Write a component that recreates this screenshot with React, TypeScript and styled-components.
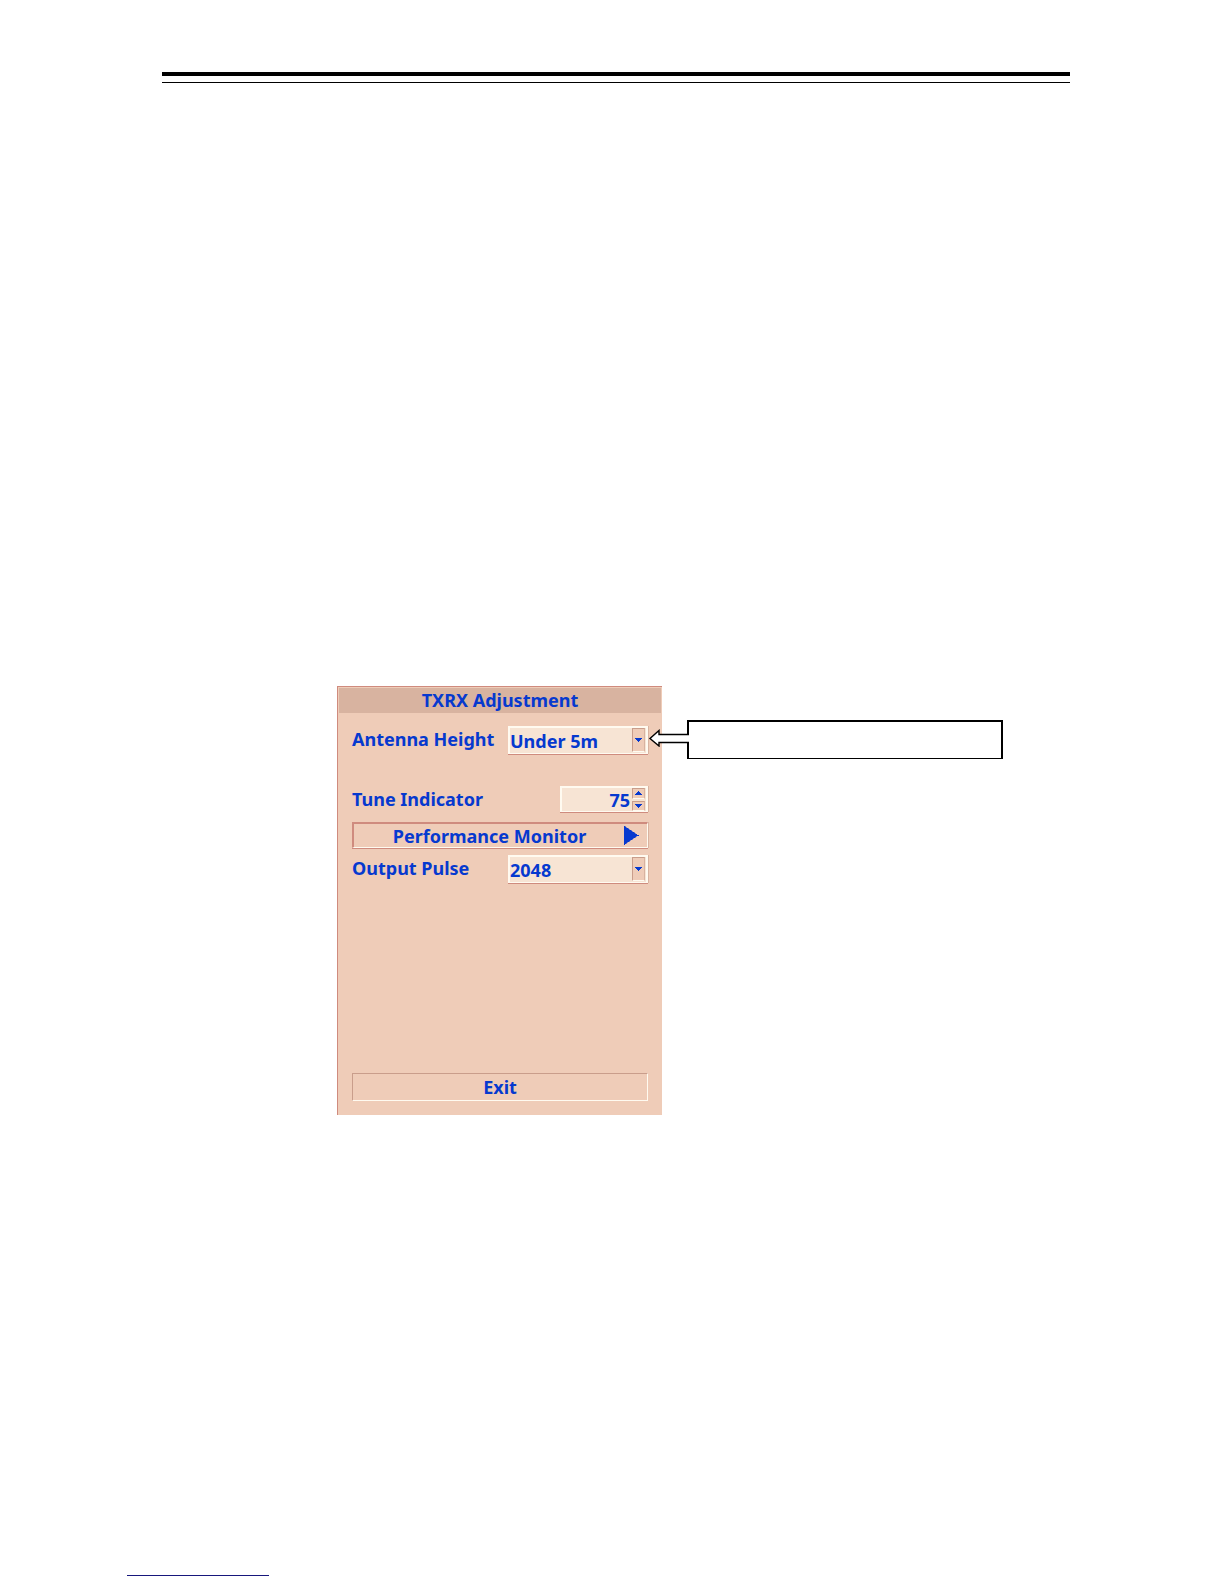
import { useState } from 'react'
import styled, { createGlobalStyle } from 'styled-components'

const GlobalStyle = createGlobalStyle`
  :root {
    --blue: #0639cf;
    --skin: #efccb8;
    --skin-light: #f7e4d4;
    --skin-dark: #d8b3a0;
    --edge: #cf8b7e;
    --edge-soft: #c99d8b;
    --shine: #fffaf0;
  }

  * {
    box-sizing: border-box;
  }

  body {
    margin: 0;
    background: #fff;
  }

  body, button, input, select {
    font-family: 'Noto Sans', Tahoma, Verdana, sans-serif;
    font-size: 18px;
    font-weight: 700;
    line-height: 24px;
  }
`

const Page = styled.div`
  display: flex;
  flex-direction: column;
  min-height: 100vh;
`

const Header = styled.header`
  height: 11px;
  margin: 72px 154px 0 162px;
  border-top: 4px solid #000;
  border-bottom: 1px solid #000;
`

const Figure = styled.main`
  display: flex;
  align-items: flex-start;
  margin: 603px 221px 0 337px;
`

const Panel = styled.form`
  display: flex;
  flex-direction: column;
  flex: 0 0 325px;
  min-height: 429px;
  border-top: 1px solid var(--edge);
  border-left: 1px solid var(--edge);
  background: var(--skin);
`

const Title = styled.h1`
  margin: 1px 1px 0;
  background: var(--skin-dark);
  color: var(--blue);
  font-size: 18px;
  line-height: 25px;
  text-align: center;
`

const Fields = styled.div`
  display: flex;
  flex-direction: column;
  flex: 1;
  padding: 13px 14px 14px;
`

const Row = styled.div<{ $gap?: number }>`
  display: flex;
  justify-content: space-between;
  align-items: flex-start;
  margin-bottom: ${({ $gap }) => $gap || 0}px;
`

const Label = styled.label`
  color: var(--blue);
  line-height: 26px;
  white-space: nowrap;
`

const Field = styled.div<{ $width: number; $height: number }>`
  display: grid;
  width: ${({ $width }) => $width}px;
  height: ${({ $height }) => $height}px;
  border: 2px solid var(--shine);
  border-bottom-width: 1px;
  box-shadow: 0 1px 0 var(--edge), 1px 0 0 var(--skin-dark);
  background: var(--skin-light);
`

const Select = styled.select`
  grid-area: 1 / 1;
  width: 100%;
  padding: 0 16px 0 0;
  border: 0;
  background: none;
  color: var(--blue);
  appearance: none;
`

const Drop = styled.span`
  grid-area: 1 / 1;
  justify-self: end;
  display: flex;
  justify-content: center;
  align-items: center;
  width: 13px;
  margin: 0 1px 1px 0;
  border: 1px solid var(--edge-soft);
  border-right-color: var(--skin-dark);
  border-bottom-color: var(--shine);
  background: var(--skin);
  pointer-events: none;
`

const Spin = styled(Field)`
  grid-template-columns: 1fr 13px;
  padding-right: 1px;
`

const Input = styled.input`
  min-width: 0;
  padding: 0 2px 0 0;
  border: 0;
  background: none;
  color: var(--blue);
  text-align: right;
`

const Steps = styled.div`
  display: grid;
  gap: 2px;
  padding-bottom: 1px;
`

const Step = styled.button`
  display: flex;
  justify-content: center;
  align-items: center;
  padding: 0;
  border: 1px solid var(--edge-soft);
  border-right-color: var(--skin-dark);
  border-bottom-color: var(--shine);
  background: var(--skin);
`

const Button = styled.button`
  display: grid;
  grid-template-columns: 1fr 21px;
  align-items: center;
  height: 26px;
  margin: 0 0 7px;
  padding: 0 2px 0 0;
  border: 2px solid var(--edge);
  border-right: 1px solid var(--shine);
  border-bottom: 1px solid var(--shine);
  box-shadow: 0 1px 0 var(--edge), 1px 0 0 var(--skin-dark);
  background: none;
  color: var(--blue);
`

const ButtonText = styled.span`
  line-height: 22px;
  padding-left: 1px;
`

const ExitButton = styled.button`
  height: 28px;
  margin-top: auto;
  padding: 0;
  border: 1px solid var(--edge-soft);
  border-right-color: var(--shine);
  border-bottom-color: var(--shine);
  background: none;
  color: var(--blue);
`

const Callout = styled.div`
  position: relative;
  flex: 1;
  height: 39px;
  margin: 34px 0 0 25px;
  border: 2px solid #000;
  border-bottom-width: 1px;
`

const Pointer = styled.svg`
  position: absolute;
  top: 7px;
  right: 100%;
`

const FooterRule = styled.hr`
  width: 142px;
  margin: auto 0 8px 127px;
  border: 0;
  border-top: 1px solid #17177c;
`

function Triangle({ up = false }: { up?: boolean }) {
  return (
    <svg width="7" height="4" viewBox="0 0 7 4" fill="#0639cf" shapeRendering="crispEdges" aria-hidden="true">
      <path d={up ? 'M0 4V3H1V2H2V1H3V0H4V1H5V2H6V3H7V4Z' : 'M0 0V1H1V2H2V3H3V4H4V3H5V2H6V1H7V0Z'} />
    </svg>
  )
}

function App() {
  const [tune, setTune] = useState(75)

  return (
    <Page>
      <GlobalStyle />
      <Header />
      <Figure>
        <Panel onSubmit={e => e.preventDefault()}>
          <Title>TXRX Adjustment</Title>
          <Fields>
            <Row $gap={32}>
              <Label htmlFor="antenna">Antenna Height</Label>
              <Field $width={140} $height={28}>
                <Select id="antenna">
                  <option>Under 5m</option>
                </Select>
                <Drop><Triangle /></Drop>
              </Field>
            </Row>
            <Row $gap={10}>
              <Label htmlFor="tune">Tune Indicator</Label>
              <Spin $width={88} $height={26}>
                <Input id="tune" value={tune} onChange={e => setTune(Number(e.target.value) || 0)} />
                <Steps>
                  <Step type="button" aria-label="Increase" onClick={() => setTune(tune + 1)}><Triangle up /></Step>
                  <Step type="button" aria-label="Decrease" onClick={() => setTune(tune - 1)}><Triangle /></Step>
                </Steps>
              </Spin>
            </Row>
            <Button type="button">
              <ButtonText>Performance Monitor</ButtonText>
              <svg width="15" height="19" viewBox="0 0 15 19" fill="#0639cf" aria-hidden="true">
                <path d="M0 0H1L3 2H4L6 4H7L9 6H10L12 8H13V9H15V10H13L11 12H10L8 14H7L5 16H4L2 18H1V19H0Z" />
              </svg>
            </Button>
            <Row>
              <Label htmlFor="pulse">Output Pulse</Label>
              <Field $width={140} $height={28}>
                <Select id="pulse">
                  <option>2048</option>
                </Select>
                <Drop><Triangle /></Drop>
              </Field>
            </Row>
            <ExitButton type="button">Exit</ExitButton>
          </Fields>
        </Panel>
        <Callout>
          <Pointer width="41" height="18" viewBox="0 0 41 18" fill="#fff" stroke="#000" strokeWidth="1.4" aria-hidden="true">
            <path d="M41 5.5H11V1.5L2 9.5L11 17V13.5H41" />
          </Pointer>
        </Callout>
      </Figure>
      <FooterRule />
    </Page>
  )
}

export default App
